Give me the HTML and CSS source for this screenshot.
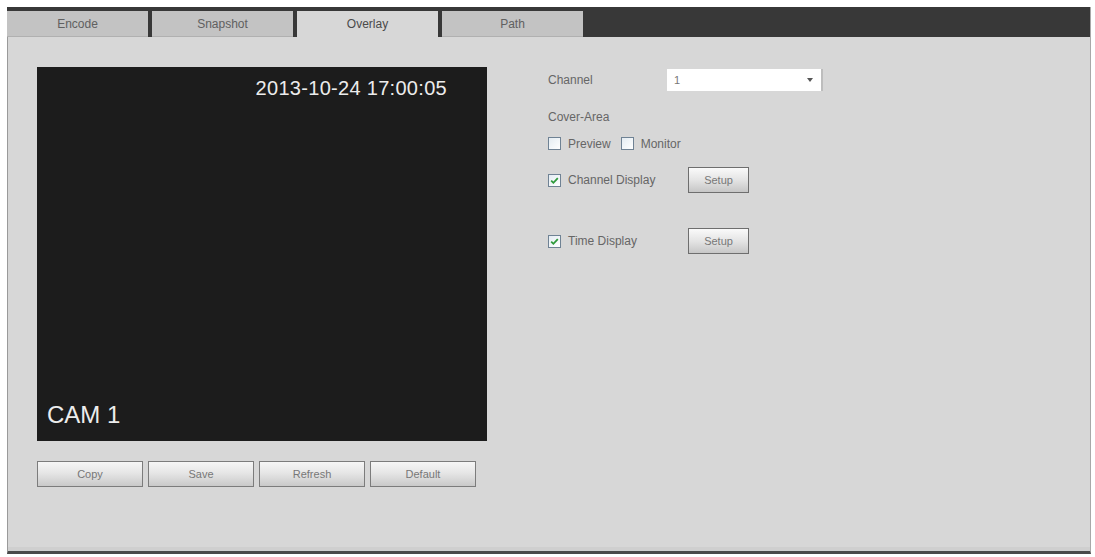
FILE: index.html
```html
<!DOCTYPE html>
<html>
<head>
<meta charset="utf-8">
<title>Overlay</title>
<link rel="stylesheet" href="styles.css">
</head>
<body>
<div class="frame">
  <div class="tabbar">
    <div class="tab">Encode</div>
    <div class="tab">Snapshot</div>
    <div class="tab active">Overlay</div>
    <div class="tab">Path</div>
  </div>
  <div class="content">
    <div class="left">
      <div class="video">
        <div class="datetime">2013-10-24 17:00:05</div>
        <div class="camname">CAM 1</div>
      </div>
      <div class="btnrow">
        <div class="btn">Copy</div>
        <div class="btn">Save</div>
        <div class="btn">Refresh</div>
        <div class="btn">Default</div>
      </div>
    </div>
    <div class="right">
      <div class="row-channel">
        <div class="lbl">Channel</div>
        <div class="select"><span>1</span><span class="arrow"></span></div>
      </div>
      <div class="cover">Cover-Area</div>
      <div class="row-check">
        <span class="cb"></span><span class="cbtext">Preview</span>
        <span class="cb cb-gap"></span><span class="cbtext">Monitor</span>
      </div>
      <div class="row-setup first">
        <div class="checklbl">
          <span class="cb checked"><svg viewBox="0 0 11 11" width="11" height="11"><path d="M2.2 5.6 L4.4 7.8 L8.8 3.2" fill="none" stroke="#2e9a3a" stroke-width="1.8"/></svg></span>
          <span class="cbtext">Channel Display</span>
        </div>
        <div class="setup">Setup</div>
      </div>
      <div class="row-setup second">
        <div class="checklbl">
          <span class="cb checked"><svg viewBox="0 0 11 11" width="11" height="11"><path d="M2.2 5.6 L4.4 7.8 L8.8 3.2" fill="none" stroke="#2e9a3a" stroke-width="1.8"/></svg></span>
          <span class="cbtext">Time Display</span>
        </div>
        <div class="setup">Setup</div>
      </div>
    </div>
  </div>
</div>
</body>
</html>
```

FILE: styles.css
```css
* { box-sizing: border-box; }
html, body { margin: 0; padding: 0; background: #ffffff; }
body { font-family: "Liberation Sans", Arial, sans-serif; }

.frame {
  margin: 7px 0 0 7px;
  width: 1084px;
  height: 547px;
  background: #d7d7d7;
  border-left: 1px solid #9a9a9a;
  border-right: 1px solid #a8a8a8;
  border-bottom: 3px solid #4a4a4a;
  box-shadow: inset 0 -4px 0 #cfcfcf;
  display: flex;
  flex-direction: column;
}

.tabbar {
  height: 30px;
  background: #383838;
  padding-top: 4px;
  display: flex;
  gap: 4px;
  margin-left: -1px;
}
.tab {
  width: 141px;
  height: 26px;
  background: #c3c3c3;
  color: #606060;
  font-size: 12px;
  display: flex;
  align-items: center;
  justify-content: center;
  border-bottom: 1px solid #b0b0b0;
}
.tab.active {
  background: #d7d7d7;
  color: #4a4a4a;
  border-bottom: none;
}

.content {
  display: flex;
  padding: 30px 0 0 29px;
}

.left { width: 450px; }
.video {
  width: 450px;
  height: 374px;
  background: #1c1c1c;
  display: flex;
  flex-direction: column;
  justify-content: space-between;
  color: #ececec;
}
.datetime {
  align-self: flex-end;
  padding: 10px 40px 0 0;
  font-size: 20px;
  line-height: 23px;
  letter-spacing: 0.3px;
}
.camname {
  padding: 0 0 12px 10px;
  font-size: 24px;
  line-height: 28px;
}

.btnrow {
  display: flex;
  gap: 5px;
  margin-top: 20px;
}
.btn {
  width: 106px;
  height: 26px;
  border: 1px solid #7c7c7c;
  background: linear-gradient(#f6f6f6, #e6e6e6 45%, #c9c9c9);
  color: #777;
  font-size: 11px;
  display: flex;
  align-items: center;
  justify-content: center;
}

.right {
  margin-left: 61px;
  padding-top: 2px;
  color: #666;
  font-size: 12px;
  display: flex;
  flex-direction: column;
}
.row-channel {
  display: flex;
  align-items: center;
  height: 22px;
}
.lbl { width: 119px; }
.select {
  width: 156px;
  height: 22px;
  background: #ffffff;
  border-right: 2px solid #bdbdbd;
  display: flex;
  align-items: center;
  justify-content: space-between;
  padding: 0 8px 0 7px;
  font-size: 11px;
  color: #777;
}
.arrow {
  width: 0;
  height: 0;
  border-left: 3px solid transparent;
  border-right: 3px solid transparent;
  border-top: 4px solid #555;
}
.cover {
  margin-top: 19px;
  line-height: 14px;
}
.row-check {
  margin-top: 13px;
  height: 13px;
  display: flex;
  align-items: center;
}
.cb {
  width: 13px;
  height: 13px;
  border: 1px solid #6f8294;
  background: linear-gradient(135deg, #e4ecf2, #ffffff);
  display: inline-flex;
  align-items: center;
  justify-content: center;
  flex: none;
}
.cb-gap { margin-left: 10px; }
.cbtext { margin-left: 7px; }

.row-setup {
  display: flex;
  align-items: center;
  height: 26px;
}
.row-setup.first { margin-top: 17px; }
.row-setup.second { margin-top: 35px; }
.checklbl {
  width: 140px;
  display: flex;
  align-items: center;
}
.setup {
  width: 61px;
  height: 26px;
  border: 1px solid #6e6e6e;
  background: linear-gradient(#fafafa, #e4e4e4 50%, #c6c6c6);
  color: #777;
  font-size: 11px;
  display: flex;
  align-items: center;
  justify-content: center;
}
```
